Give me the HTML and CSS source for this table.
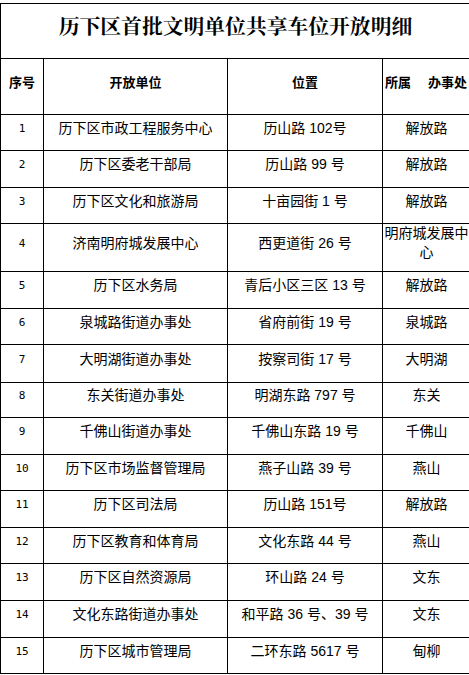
FILE: index.html
```html
<!DOCTYPE html>
<html lang="zh-CN">
<head>
<meta charset="utf-8">
<title>历下区首批文明单位共享车位开放明细</title>
<link rel="stylesheet" href="styles.css">
</head>
<body>
<div class="sheet">
  <div class="cell title">历下区首批文明单位共享车位开放明细</div>

  <div class="cell head">序号</div>
  <div class="cell head">开放单位</div>
  <div class="cell head">位置</div>
  <div class="cell head office"><span>所属</span><span class="gap"></span><span>办事处</span></div>

  <div class="cell num">1</div><div class="cell">历下区市政工程服务中心</div><div class="cell">历山路 102号</div><div class="cell">解放路</div>
  <div class="cell num">2</div><div class="cell">历下区委老干部局</div><div class="cell">历山路 99 号</div><div class="cell">解放路</div>
  <div class="cell num">3</div><div class="cell">历下区文化和旅游局</div><div class="cell">十亩园街 1 号</div><div class="cell">解放路</div>
  <div class="cell num">4</div><div class="cell">济南明府城发展中心</div><div class="cell">西更道街 26 号</div><div class="cell wrap">明府城发展中心</div>
  <div class="cell num">5</div><div class="cell">历下区水务局</div><div class="cell">青后小区三区 13 号</div><div class="cell">解放路</div>
  <div class="cell num">6</div><div class="cell">泉城路街道办事处</div><div class="cell">省府前街 19 号</div><div class="cell">泉城路</div>
  <div class="cell num">7</div><div class="cell">大明湖街道办事处</div><div class="cell">按察司街 17 号</div><div class="cell">大明湖</div>
  <div class="cell num">8</div><div class="cell">东关街道办事处</div><div class="cell">明湖东路 797 号</div><div class="cell">东关</div>
  <div class="cell num">9</div><div class="cell">千佛山街道办事处</div><div class="cell">千佛山东路 19 号</div><div class="cell">千佛山</div>
  <div class="cell num">10</div><div class="cell">历下区市场监督管理局</div><div class="cell">燕子山路 39 号</div><div class="cell">燕山</div>
  <div class="cell num">11</div><div class="cell">历下区司法局</div><div class="cell">历山路 151号</div><div class="cell">解放路</div>
  <div class="cell num">12</div><div class="cell">历下区教育和体育局</div><div class="cell">文化东路 44 号</div><div class="cell">燕山</div>
  <div class="cell num">13</div><div class="cell">历下区自然资源局</div><div class="cell">环山路 24 号</div><div class="cell">文东</div>
  <div class="cell num">14</div><div class="cell">文化东路街道办事处</div><div class="cell">和平路 36 号、39 号</div><div class="cell">文东</div>
  <div class="cell num">15</div><div class="cell">历下区城市管理局</div><div class="cell">二环东路 5617 号</div><div class="cell">甸柳</div>
</div>
</body>
</html>
```

FILE: styles.css
```css
html {
  overflow: hidden;
  background: #fff;
}

body {
  margin: 0;
  background: #fff;
  color: #000;
  font-family: "Liberation Sans", "Noto Sans CJK SC", sans-serif;
  font-size: 14px;
}

.sheet {
  display: grid;
  grid-template-columns: 42px 183px 154px 87px;
  grid-template-rows: 54px 55px 35px 36px 35px 47px 36px 35px 37px 34px 36px 35px 36px 35px 36px 36px 35px;
  gap: 1px;
  padding: 1px;
  margin-top: 3px;
  width: max-content;
  background: #000;
}

.cell {
  display: flex;
  align-items: center;
  justify-content: center;
  text-align: center;
  background: #fff;
  padding-bottom: 9px;
  line-height: 19px;
  white-space: nowrap;
}

.title {
  grid-column: 1 / -1;
  font-family: "Noto Serif CJK SC", "Noto Sans CJK SC", serif;
  font-weight: 700;
  font-size: 20.8px;
  padding-bottom: 11px;
}

.head {
  font-family: "Noto Sans CJK SC", sans-serif;
  font-weight: 700;
  font-size: 13px;
  padding-bottom: 10px;
}

.office {
  justify-content: flex-start;
  padding-left: 2px;
}

.gap {
  display: inline-block;
  width: 17px;
}

.num {
  font-family: "DejaVu Sans Mono", monospace;
  font-size: 11px;
}

.wrap {
  white-space: normal;
  word-break: break-all;
}
```
